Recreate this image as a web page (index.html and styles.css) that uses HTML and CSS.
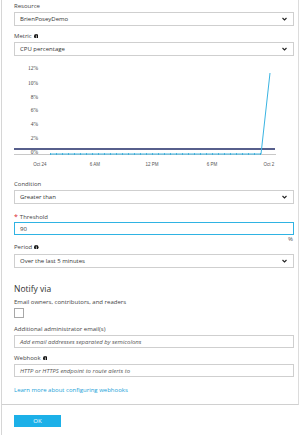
FILE: index.html
```html
<!DOCTYPE html>
<html>
<head>
<meta charset="utf-8">
<link rel="stylesheet" href="styles.css">
</head>
<body>
<div class="blade">
  <div class="form">
    <div class="label first">Resource</div>
    <div class="select"><span>BrienPoseyDemo</span><svg class="chev" viewBox="0 0 6 4"><polyline points="0.6,0.8 3,3.2 5.4,0.8"/></svg></div>

    <div class="label gap5">Metric <svg class="info" viewBox="0 0 6 6"><circle cx="3" cy="3" r="3"/><rect x="2.5" y="1" width="1" height="1"/><rect x="2.5" y="2.4" width="1" height="2.8"/></svg></div>
    <div class="select"><span>CPU percentage</span><svg class="chev" viewBox="0 0 6 4"><polyline points="0.6,0.8 3,3.2 5.4,0.8"/></svg></div>

    <svg class="chart" viewBox="0 0 280 116" width="280" height="116">
      <g class="ylab">
        <text x="24" y="14">12%</text>
        <text x="24" y="28.5">10%</text>
        <text x="24" y="42.5">8%</text>
        <text x="24" y="56">6%</text>
        <text x="24" y="70">4%</text>
        <text x="24" y="84">2%</text>
        <text x="24" y="98">0%</text>
      </g>
      <line class="axis" x1="0" y1="98.5" x2="262" y2="98.5"/>
      <line class="thr" x1="0" y1="93" x2="261" y2="93"/>
      <polyline class="data" points="36,98 247,98 256,17"/>
      <line class="dots" x1="36" y1="98" x2="247" y2="98"/>
      <g class="xlab">
        <text x="26" y="110">Oct 24</text>
        <text x="81" y="110">6 AM</text>
        <text x="138" y="110">12 PM</text>
        <text x="198" y="110">6 PM</text>
        <text x="255" y="110">Oct 2</text>
      </g>
    </svg>

    <div class="label">Condition</div>
    <div class="select"><span>Greater than</span><svg class="chev" viewBox="0 0 6 4"><polyline points="0.6,0.8 3,3.2 5.4,0.8"/></svg></div>

    <div class="label gap8"><span class="req">*</span> Threshold</div>
    <div class="input active">90</div>
    <div class="unit">%</div>

    <div class="label">Period <svg class="info" viewBox="0 0 6 6"><circle cx="3" cy="3" r="3"/><rect x="2.5" y="1" width="1" height="1"/><rect x="2.5" y="2.4" width="1" height="2.8"/></svg></div>
    <div class="select sp1"><span>Over the last 5 minutes</span><svg class="chev" viewBox="0 0 6 4"><polyline points="0.6,0.8 3,3.2 5.4,0.8"/></svg></div>

    <div class="heading">Notify via</div>
    <div class="label tight">Email owners, contributors, and readers</div>
    <div class="checkbox"></div>

    <div class="label gap7">Additional administrator email(s)</div>
    <div class="input ph">Add email addresses separated by semicolons</div>

    <div class="label gap5">Webhook <svg class="info" viewBox="0 0 6 6"><circle cx="3" cy="3" r="3"/><rect x="2.5" y="1" width="1" height="1"/><rect x="2.5" y="2.4" width="1" height="2.8"/></svg></div>
    <div class="input ph">HTTP or HTTPS endpoint to route alerts to</div>

    <div class="link">Learn more about configuring webhooks</div>
  </div>
  <div class="footer">
    <div class="ok">OK</div>
  </div>
</div>
</body>
</html>
```
FILE: styles.css
```css
html, body {
  margin: 0;
  padding: 0;
  background: #fff;
}
body {
  font-family: "Open Sans", "Noto Sans", sans-serif;
  color: #444;
  width: 300px;
  height: 435px;
  overflow: hidden;
}
.blade {
  margin-left: 1px;
  width: 297px;
  height: 435px;
  border-left: 1px solid #d6d6d6;
}
.form {
  box-sizing: border-box;
  width: 297px;
  height: 405px;
  padding: 0 4px 0 12px;
  border-right: 1px solid #dcdcdc;
  border-bottom: 1px solid #d0d0d0;
  display: flex;
  flex-direction: column;
}
.label {
  font-size: 6px;
  line-height: 10px;
  height: 10px;
  color: #444;
  margin-top: 7px;
  display: flex;
  align-items: center;
  gap: 2px;
  white-space: nowrap;
  flex-shrink: 0;
}
.label.first { margin-top: 1px; }
.label.gap5 { margin-top: 5px; }
.label.gap7 { margin-top: 6px; }
.label.gap8 { margin-top: 8px; }
.label.tight { margin-top: 2px; }
.req { color: #d9262c; font-size: 7px; }
.info { width: 4.5px; height: 4.5px; fill: #111; }
.info rect { fill: #fff; }
.select, .input {
  box-sizing: border-box;
  margin-top: 1px;
  height: 14px;
  flex-shrink: 0;
  border: 1px solid #cfcfcf;
  font-size: 6px;
  color: #333;
  display: flex;
  align-items: center;
  justify-content: space-between;
  padding: 0 6px 0 5px;
  white-space: nowrap;
}
.select.sp1 { margin-top: 2px; }
.input { height: 13px; }
.input.active {
  border: 1.5px solid #2fb3e3;
  height: 13px;
  margin-top: 0;
}
.input.ph {
  font-style: italic;
  color: #555;
  justify-content: flex-start;
}
.chev {
  width: 5px;
  height: 4px;
  fill: none;
  stroke: #222;
  stroke-width: 1.3;
}
.chart {
  display: block;
  flex-shrink: 0;
  width: 280px;
  height: 116px;
}
.ylab text {
  font-family: "Liberation Serif", serif;
  font-size: 5.5px;
  fill: #444;
  text-anchor: end;
}
.xlab text {
  font-family: "Liberation Sans", sans-serif;
  font-size: 4.5px;
  fill: #555;
  text-anchor: middle;
}
.axis { stroke: #c8c8c8; stroke-width: 1; }
.thr { stroke: #1f2a66; stroke-width: 1.3; }
.data { fill: none; stroke: #3ab4e2; stroke-width: 1; }
.dots {
  stroke: #2aa6d8;
  stroke-width: 1.6;
  stroke-dasharray: 1 5;
}
.unit {
  font-size: 6px;
  line-height: 8px;
  height: 8px;
  text-align: right;
  padding-right: 1px;
  color: #555;
  flex-shrink: 0;
}
.unit + .label { margin-top: -1px; }
.heading {
  font-size: 8.5px;
  line-height: 12px;
  height: 12px;
  color: #333;
  margin-top: 15px;
  flex-shrink: 0;
}
.checkbox {
  box-sizing: border-box;
  width: 10px;
  height: 10px;
  border: 1px solid #a8a8a8;
  margin-top: 1px;
  flex-shrink: 0;
}
.link {
  font-size: 6px;
  line-height: 10px;
  color: #1a9fd8;
  margin-top: 8px;
}
.footer {
  padding: 10px 0 0 12px;
}
.ok {
  width: 47px;
  height: 12px;
  background: #1cb0e8;
  color: #fff;
  font-size: 6px;
  line-height: 12px;
  text-align: center;
}
```
